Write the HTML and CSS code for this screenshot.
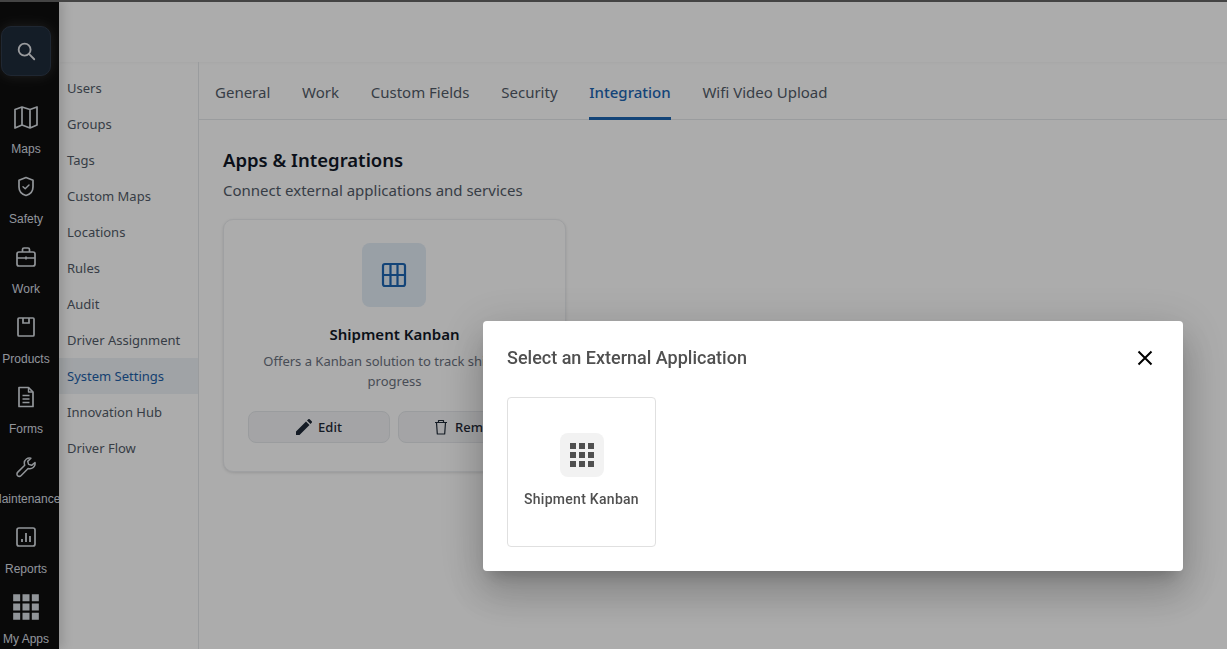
FILE: index.html
```html
<!DOCTYPE html>
<html lang="en">
<head>
    <meta charset="UTF-8">
    <meta name="viewport" content="width=device-width, initial-scale=1.0">
    <title>System Settings</title>
    <link rel="stylesheet" href="styles.css">
</head>
<body>

    <div class="app">
        <div class="rail">
            <div class="search-btn">
                <svg width="22" height="22" viewBox="0 0 24 24" fill="none" stroke="currentColor" stroke-width="2" stroke-linecap="round"><circle cx="10.5" cy="10.5" r="6.5"/><path d="M15.5 15.5 21 21"/></svg>
            </div>
            <div class="rail-item rail-first">
                <svg width="28" height="28" viewBox="0 0 28 28" fill="none" stroke="currentColor" stroke-width="1.7" stroke-linejoin="round"><path d="M3 6.5 10 4l8 2.5L25 4v18l-7 3-8-3-7 3zM10 4v18M18 6.5V25"/></svg>
                <span>Maps</span>
            </div>
            <div class="rail-item">
                <svg width="28" height="28" viewBox="0 0 28 28" fill="none" stroke="currentColor" stroke-width="1.7" stroke-linejoin="round" stroke-linecap="round"><path d="M14 4.500l7 2.700v6.800c0 4.300-3 7.300-7 8.500-4-1.200-7-4.200-7-8.500V7.200z"/><path d="M11 13.700l2.200 2.100 3.800-3.800" stroke-width="1.400"/></svg>
                <span>Safety</span>
            </div>
            <div class="rail-item">
                <svg width="28" height="28" viewBox="0 0 28 28" fill="none" stroke="currentColor" stroke-width="1.7" stroke-linejoin="round"><rect x="5" y="9" width="18" height="14" rx="2"/><path d="M10.500 9V6.500a1.500 1.500 0 0 1 1.500-1.500h4a1.500 1.500 0 0 1 1.500 1.500V9M5 15h18M14 13.500v3"/></svg>
                <span>Work</span>
            </div>
            <div class="rail-item">
                <svg width="28" height="28" viewBox="0 0 28 28" fill="none" stroke="currentColor" stroke-width="1.7"><rect x="6" y="5" width="16" height="18" rx="1"/><path d="M11 5v5h6V5"/></svg>
                <span>Products</span>
            </div>
            <div class="rail-item">
                <svg width="28" height="28" viewBox="0 0 28 28" fill="none" stroke="currentColor" stroke-width="1.7" stroke-linejoin="round"><path d="M7 4.500h9.500L21 9v14.500H7z"/><path d="M16.500 4.500V9H21M10.500 12.500h7M10.500 16h7M10.500 19.500h7" stroke-width="1.400"/></svg>
                <span>Forms</span>
            </div>
            <div class="rail-item">
                <svg width="28" height="28" viewBox="0 0 28 28" fill="none" stroke="currentColor" stroke-width="1.500" stroke-linejoin="round"><path d="M23 9.500l-3.400 2.800-3-.9-.9-3 3.200-3.100c-3.200-1-6.600 1.300-6.600 4.700 0 .8.200 1.500.4 2.200l-6.900 6.900c-1.100 1.100-1.100 2.700-.2 3.600s2.500.9 3.600-.2l6.900-7c3.800 1.300 7.600-1.900 6.900-6z"/></svg>
                <span>Maintenance</span>
            </div>
            <div class="rail-item">
                <svg width="28" height="28" viewBox="0 0 28 28" fill="none" stroke="currentColor" stroke-width="1.700"><rect x="5" y="5" width="18" height="18" rx="2"/><path d="M10 19v-3M14 19V10M18 19v-6" stroke-width="1.800"/></svg>
                <span>Reports</span>
            </div>
            <div class="rail-item">
                <svg width="28" height="28" viewBox="0 0 24 24" fill="currentColor"><path d="M1 1h6v6H1zM9 1h6v6H9zM17 1h6v6h-6zM1 9h6v6H1zM9 9h6v6H9zM17 9h6v6h-6zM1 17h6v6H1zM9 17h6v6H9zM17 17h6v6h-6z"/></svg>
                <span>My Apps</span>
            </div>
        </div>

        <div class="main">
            <div class="header"></div>
            <div class="body">
                <div class="subnav">
                    <div class="subnav-item">Users</div>
                    <div class="subnav-item">Groups</div>
                    <div class="subnav-item">Tags</div>
                    <div class="subnav-item">Custom Maps</div>
                    <div class="subnav-item">Locations</div>
                    <div class="subnav-item">Rules</div>
                    <div class="subnav-item">Audit</div>
                    <div class="subnav-item">Driver Assignment</div>
                    <div class="subnav-item active">System Settings</div>
                    <div class="subnav-item">Innovation Hub</div>
                    <div class="subnav-item">Driver Flow</div>
                </div>
                <div class="content">
                    <div class="tabs">
                        <div class="tab">General</div>
                        <div class="tab">Work</div>
                        <div class="tab">Custom Fields</div>
                        <div class="tab">Security</div>
                        <div class="tab active">Integration</div>
                        <div class="tab">Wifi Video Upload</div>
                    </div>
                    <div class="panel">
                        <h2 class="panel-title">Apps &amp; Integrations</h2>
                        <p class="panel-sub">Connect external applications and services</p>
                        <div class="app-card">
                            <div class="app-icon">
                                <svg width="28" height="28" viewBox="0 0 28 28" fill="none" stroke="currentColor" stroke-width="2.200"><rect x="3" y="3" width="22" height="22" rx="2"/><path d="M3 14h22M10.500 3v22M17.500 3v22"/></svg>
                            </div>
                            <div class="app-name">Shipment Kanban</div>
                            <div class="app-desc">Offers a Kanban solution to track shipment progress</div>
                            <div class="app-actions">
                                <div class="app-btn">
                                    <svg width="16" height="16" viewBox="0 0 16 16" fill="currentColor"><path d="M0 16v-3.500L10 2.500 13.500 6 3.500 16zM11 1.500 12.300.3a1 1 0 0 1 1.400 0l2 2a1 1 0 0 1 0 1.400L14.500 5z"/></svg>
                                    Edit
                                </div>
                                <div class="app-btn">
                                    <svg width="16" height="16" viewBox="0 0 16 16" fill="none" stroke="currentColor" stroke-width="1.200" stroke-linejoin="round"><path d="M2 3.500h12M5.500 3.500V1.500h5v2M3.500 3.500l.8 11.500h7.400l.8-11.500"/></svg>
                                    Remove
                                </div>
                            </div>
                        </div>
                    </div>
                </div>
            </div>
        </div>
    </div>

    <div class="backdrop"></div>

    <div class="modal">
        <div class="modal-head">
            <div class="modal-title">Select an External Application</div>
            <svg class="modal-close" width="16" height="16" viewBox="0 0 16 16" fill="none" stroke="currentColor" stroke-width="2"><path d="M1.500 1.500l13 13M14.500 1.500l-13 13"/></svg>
        </div>
        <div class="pick-card">
            <div class="pick-icon">
                <svg width="24" height="24" viewBox="0 0 24 24" fill="currentColor"><path d="M0 0h6v6H0zM9 0h6v6H9zM18 0h6v6h-6zM0 9h6v6H0zM9 9h6v6H9zM18 9h6v6h-6zM0 18h6v6H0zM9 18h6v6H9zM18 18h6v6h-6z"/></svg>
            </div>
            <div class="pick-name">Shipment Kanban</div>
        </div>
    </div>

</body>
</html>
```

FILE: styles.css
```css
html, body {
    height: 100%;
}
body {
    margin: 0;
    font-family: "Noto Sans", sans-serif;
    background-color: #fff;
    overflow: hidden;
}
.app {
    display: flex;
    height: 100vh;
}
.rail {
    flex: 0 0 59px;
    width: 59px;
    background-color: #0e0e0e;
    color: #d8dde3;
    display: flex;
    flex-direction: column;
    align-items: center;
    overflow: hidden;
    padding-top: 26px;
    box-sizing: border-box;
    z-index: 2;
    box-shadow: 4px 0 10px rgba(0, 0, 0, 0.15);
}
.search-btn {
    flex: 0 0 48px;
    width: 48px;
    margin: 0 8px 0 0;
    display: flex;
    align-items: center;
    justify-content: center;
    background-color: #1f2b3b;
    border: 1px solid #2e3a4b;
    border-radius: 10px;
    color: #e5e7eb;
    box-shadow: 0 0 14px rgba(255, 255, 255, 0.14);
}
.rail-item {
    flex: 0 0 70px;
    width: 100%;
    margin-left: -7px;
    display: flex;
    flex-direction: column;
    align-items: center;
    box-sizing: border-box;
    padding-top: 3px;
    white-space: nowrap;
    font-family: "Liberation Sans", sans-serif;
    font-size: 12px;
}
.rail-item svg {
    flex: none;
    margin-bottom: 11px;
}
.rail-item span {
    line-height: 14px;
}
.rail-first {
    margin-top: 24px;
}
.main {
    flex: 1;
    min-width: 0;
    display: flex;
    flex-direction: column;
}
.header {
    flex: 0 0 62px;
    background-color: #fff;
    box-shadow: 0 1px 3px rgba(0, 0, 0, 0.04);
}
.body {
    flex: 1;
    display: flex;
    min-height: 0;
}
.subnav {
    flex: 0 0 139px;
    padding-top: 8px;
    border-right: 1px solid #e5e7eb;
}
.subnav-item {
    height: 36px;
    line-height: 36px;
    padding-left: 8px;
    font-size: 13px;
    color: #525b68;
    white-space: nowrap;
}
.subnav-item.active {
    background-color: #eef2f6;
    color: #1d5fa8;
}
.content {
    flex: 1;
    min-width: 0;
}
.tabs {
    display: flex;
    gap: 31.750px;
    height: 55px;
    padding: 2px 16px 0;
    border-bottom: 1px solid #e5e7eb;
}
.tab {
    font-size: 15px;
    line-height: 57px;
    color: #525b68;
}
.tab.active {
    color: #1d66b3;
    font-weight: 500;
    border-bottom: 3px solid #1d66b3;
    height: 53px;
}
.panel {
    padding: 27px 24px;
}
.panel-title {
    margin: 0;
    font-size: 18.500px;
    font-weight: 600;
    line-height: 26px;
    color: #111827;
}
.panel-sub {
    margin: 7px 0 0;
    font-size: 15px;
    line-height: 20px;
    color: #525b68;
}
.app-card {
    width: 343px;
    height: 253px;
    box-sizing: border-box;
    margin-top: 19px;
    padding: 23px 24px 0;
    border: 1px solid #eceef1;
    border-radius: 10px;
    background-color: #fff;
    box-shadow: 0 1px 3px rgba(0, 0, 0, 0.12);
    text-align: center;
}
.app-icon {
    width: 64px;
    height: 64px;
    margin: 0 auto;
    position: relative;
    left: -1px;
    border-radius: 8px;
    background-color: #e3edf7;
    color: #1d66b3;
    display: flex;
    align-items: center;
    justify-content: center;
}
.app-name {
    margin-top: 16px;
    font-size: 15px;
    font-weight: 600;
    line-height: 22px;
    color: #111827;
}
.app-desc {
    margin-top: 6px;
    font-size: 13px;
    line-height: 20px;
    color: #6b7280;
}
.app-actions {
    display: flex;
    gap: 8px;
    width: 292px;
    margin-top: 20px;
}
.app-btn {
    flex: 1;
    height: 32px;
    box-sizing: border-box;
    border: 1px solid #e5e7eb;
    border-radius: 8px;
    background-color: #f3f4f6;
    display: flex;
    align-items: center;
    justify-content: center;
    gap: 6px;
    font-size: 13px;
    font-weight: 500;
    color: #1f2937;
}
.backdrop {
    position: fixed;
    inset: 0;
    border-top: 2px solid #444;
    background-color: rgba(0, 0, 0, 0.325);
    z-index: 5;
}
.modal {
    position: fixed;
    left: 483px;
    top: 321px;
    width: 700px;
    height: 250px;
    box-sizing: border-box;
    padding: 24px;
    background-color: #fff;
    border-radius: 4px;
    box-shadow: 0 11px 15px -7px rgba(0, 0, 0, 0.2), 0 24px 38px 3px rgba(0, 0, 0, 0.14), 0 9px 46px 8px rgba(0, 0, 0, 0.12);
    font-family: Roboto, sans-serif;
    z-index: 6;
}
.modal-head {
    display: flex;
    align-items: center;
    justify-content: space-between;
    height: 26px;
    padding-right: 6px;
}
.modal-title {
    font-size: 18px;
    font-weight: 500;
    line-height: 24px;
    margin-top: -1px;
    color: #505050;
}
.modal-close {
    color: #000;
}
.pick-card {
    width: 149px;
    height: 150px;
    box-sizing: border-box;
    margin-top: 26px;
    padding-top: 35px;
    border: 1px solid #e0e0e0;
    border-radius: 4px;
    display: flex;
    flex-direction: column;
    align-items: center;
}
.pick-icon {
    width: 44px;
    height: 44px;
    border-radius: 8px;
    background-color: #f2f2f2;
    color: #505050;
    display: flex;
    align-items: center;
    justify-content: center;
}
.pick-name {
    margin-top: 13px;
    font-size: 14px;
    font-weight: 500;
    line-height: 18px;
    letter-spacing: 0.28px;
    color: #505050;
}
```
